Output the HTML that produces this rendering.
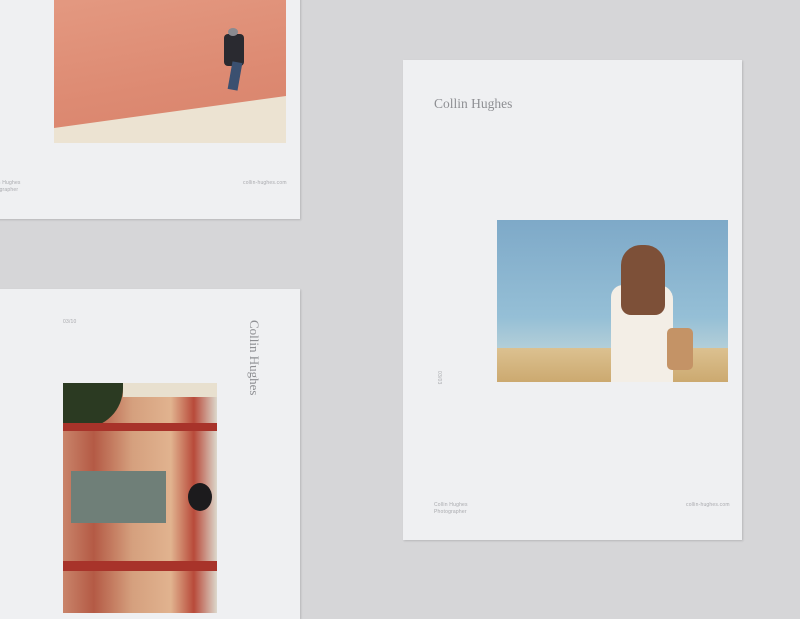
<!DOCTYPE html>
<html><head><style>
body{margin:0;width:800px;height:600px;background:#d6d6d8;position:relative;overflow:hidden;font-family:"Liberation Sans",sans-serif}
.card{position:absolute;background:#eff0f2;box-shadow:1px 1px 2px rgba(0,0,0,.15)}
.s{font-size:5px;color:#a8a9ad;letter-spacing:.2px;position:absolute;line-height:7px}
.t{font-family:"Liberation Serif",serif;color:#8e8f93;position:absolute;white-space:nowrap}
</style></head><body>
<div class="card" style="left:-10px;top:-10px;width:310px;height:229px">
 <div style="position:absolute;left:64px;top:0;width:232px;height:153px;background:linear-gradient(170deg,#e49a82 0%,#dd8a72 60%,#d7836c 100%);overflow:hidden">
  <div style="position:absolute;left:0;top:0;width:232px;height:153px;background:#ece3d2;clip-path:polygon(0 138px,232px 106px,232px 153px,0 153px)"></div>
  <div style="position:absolute;left:170px;top:44px;width:20px;height:32px;background:#2a2a30;border-radius:4px"></div>
  <div style="position:absolute;left:176px;top:72px;width:10px;height:28px;background:#3b5070;transform:rotate(10deg)"></div>
  <div style="position:absolute;left:174px;top:38px;width:10px;height:8px;background:#8a8a90;border-radius:50%"></div>
 </div>
 <div class="s" style="left:5px;top:190px">lin Hughes<br>tographer</div>
 <div class="s" style="left:253px;top:190px">collin-hughes.com</div>
</div>
<div class="card" style="left:-10px;top:289px;width:310px;height:330px">
 <div class="s" style="left:73px;top:30px">03/10</div>
 <div class="t" style="font-size:13px;transform:rotate(90deg);transform-origin:0 0;left:272px;top:31px">Collin Hughes</div>
 <div style="position:absolute;left:73px;top:94px;width:154px;height:230px;background:linear-gradient(90deg,#c9846a 0%,#b45a45 20%,#d5a07e 45%,#e1b38f 70%,#b84a3a 85%,#dcd8cc 100%);overflow:hidden">
  <div style="position:absolute;left:60px;top:0;width:94px;height:14px;background:#e8e0cf"></div>
  <div style="position:absolute;left:0;top:0;width:60px;height:45px;background:#2b3a22;border-radius:0 0 40px 0"></div>
  <div style="position:absolute;left:8px;top:88px;width:95px;height:52px;background:#6f7f78"></div>
  <div style="position:absolute;left:125px;top:100px;width:24px;height:28px;background:#1c1b1d;border-radius:50%"></div>
  <div style="position:absolute;left:0;top:40px;width:154px;height:8px;background:#a8332a"></div>
  <div style="position:absolute;left:0;top:178px;width:154px;height:10px;background:#a8332a"></div>
 </div>
</div>
<div class="card" style="left:403px;top:60px;width:339px;height:480px">
 <div class="t" style="left:31px;top:36px;font-size:13.5px">Collin Hughes</div>
 <div style="position:absolute;left:94px;top:160px;width:231px;height:162px;background:linear-gradient(180deg,#7ea9c8 0%,#95bfd6 60%,#b4cfd8 80%);overflow:hidden">
  <div style="position:absolute;left:0;top:128px;width:231px;height:40px;background:linear-gradient(#dcc190,#c9a56a)"></div>
  <div style="position:absolute;left:114px;top:65px;width:62px;height:100px;background:#f3eee6;border-radius:12px 14px 0 0"></div>
  <div style="position:absolute;left:124px;top:25px;width:44px;height:70px;background:#7d5038;border-radius:20px 20px 10px 10px"></div>
  <div style="position:absolute;left:170px;top:108px;width:26px;height:42px;background:#c49366;border-radius:5px"></div>
 </div>
 <div class="s" style="top:311px;transform:rotate(90deg);transform-origin:0 0;left:39px">03/03</div>
 <div class="s" style="left:31px;top:442px">Collin Hughes<br>Photographer</div>
 <div class="s" style="left:283px;top:442px">collin-hughes.com</div>
</div>
</body></html>
